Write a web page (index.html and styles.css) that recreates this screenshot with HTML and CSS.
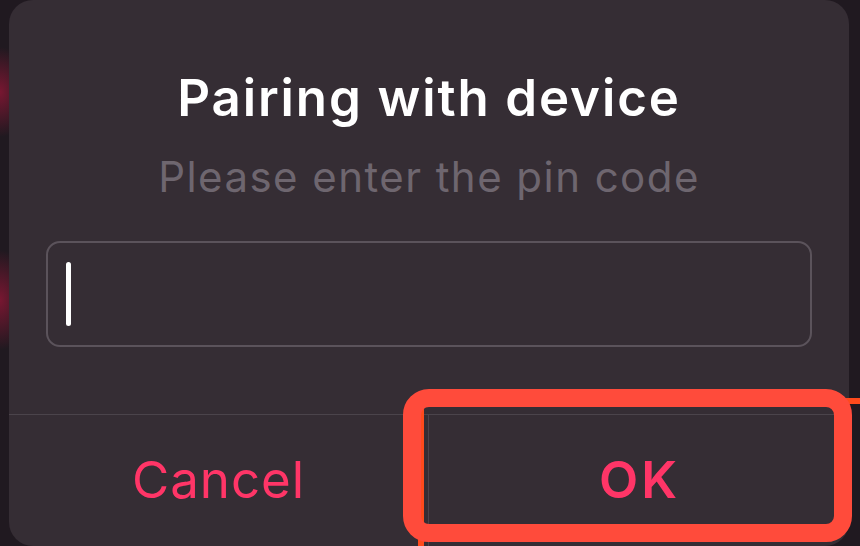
FILE: index.html
```html
<!DOCTYPE html>
<html lang="en">
<head>
<meta charset="utf-8">
<title>Pairing with device</title>
<link rel="stylesheet" href="styles.css">
</head>
<body>
  <div class="screen">
    <div class="dialog">
      <h1 class="title">Pairing with device</h1>
      <p class="subtitle">Please enter the pin code</p>
      <div class="field">
        <span class="caret"></span>
      </div>
      <div class="actions">
        <button class="action">Cancel</button>
        <button class="action action-primary">OK</button>
      </div>
    </div>
    <div class="mark mark-back"></div>
    <div class="mark mark-front"></div>
  </div>
</body>
</html>
```

FILE: styles.css
```css
* {
  box-sizing: border-box;
}

html,
body {
  margin: 0;
  padding: 0;
}

body {
  width: 860px;
  height: 546px;
  overflow: hidden;
  background: #201920;
  font-family: Inter, "Noto Sans", sans-serif;
}

.screen {
  position: relative;
  width: 860px;
  height: 546px;
  overflow: hidden;
  padding-left: 9px;
  padding-right: 11px;
  background:
    radial-gradient(ellipse 30px 45px at 0 92px, rgba(150, 22, 55, 0.75), rgba(150, 22, 55, 0) 100%),
    radial-gradient(ellipse 30px 50px at 0 300px, rgba(150, 22, 55, 0.75), rgba(150, 22, 55, 0) 100%),
    #201920;
}

.dialog {
  height: 546px;
  background: #352d34;
  border-radius: 24px;
  display: flex;
  flex-direction: column;
  align-items: stretch;
}

.title {
  margin: 0;
  padding-top: 68px;
  font-size: 51px;
  line-height: 60px;
  font-weight: 600;
  color: #ffffff;
  text-align: center;
  letter-spacing: 1.9px;
}

.subtitle {
  margin: 24px 0 0;
  font-size: 42px;
  line-height: 50px;
  font-weight: 400;
  color: #6e666f;
  text-align: center;
  letter-spacing: 1.45px;
}

.field {
  margin: 39px 37px 0;
  height: 106px;
  border: 2px solid #5b535b;
  border-radius: 14px;
  display: flex;
  align-items: center;
  padding-left: 18px;
}

.caret {
  width: 5px;
  height: 64px;
  border-radius: 3px;
  background: #ffffff;
}

.actions {
  margin-top: auto;
  height: 132px;
  border-top: 1px solid #4b444b;
  display: flex;
}

.action {
  flex: 0 0 auto;
  width: 419px;
  margin: 0;
  padding: 0 0 2px;
  border: 0;
  background: transparent;
  font-family: Inter, "Noto Sans", sans-serif;
  font-size: 51px;
  font-weight: 400;
  color: #ff3567;
  text-align: center;
  letter-spacing: 1px;
}

.action-primary {
  flex: 1 1 auto;
  width: auto;
  border-left: 1px solid #4b444b;
  font-weight: 600;
  letter-spacing: 3px;
  text-indent: 1px;
}

/* highlight marks drawn over the dialog */
.mark {
  position: absolute;
  pointer-events: none;
}

.mark-back {
  left: 418px;
  top: 398px;
  width: 520px;
  height: 220px;
  border: 6px solid #ff4a1c;
}

.mark-front {
  left: 403px;
  top: 389px;
  width: 449px;
  height: 153px;
  border: 18px solid #ff4b3b;
  border-radius: 26px;
}
```
